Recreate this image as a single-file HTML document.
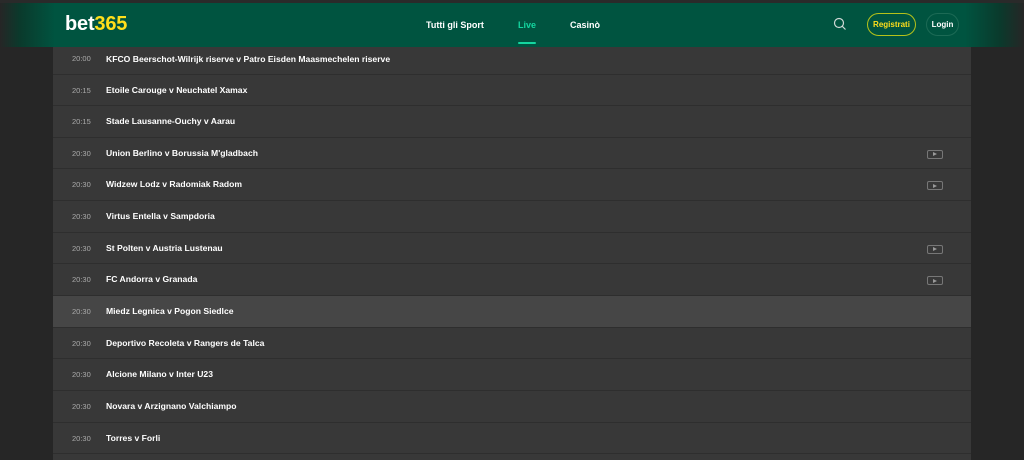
<!DOCTYPE html>
<html><head><meta charset="utf-8"><style>
*{margin:0;padding:0;box-sizing:border-box}
body{width:1024px;height:460px;overflow:hidden;background:#262626;font-family:"Liberation Sans",sans-serif;position:relative}
.hdr{position:absolute;left:0;right:0;top:3px;height:44px;background:linear-gradient(90deg,#262626 0,#0a3a2c 20px,#005440 55px,#005440 965px,#0a3a2c 1000px,#262626 1024px);z-index:2}
.top{position:absolute;left:0;right:0;top:0;height:3px;background:#2a2a2a}
.logo{position:absolute;left:65px;top:10px;font-weight:bold;font-size:20px;color:#fff;letter-spacing:-0.2px}
.logo span{color:#ffdf1b}
.nav{position:absolute;top:17px;font-size:9px;font-weight:bold;color:#fff}
.ul{position:absolute;left:518px;top:42px;width:18px;height:2px;background:#14d6a0;border-radius:1px}
.btn{position:absolute;top:13px;height:23px;border-radius:12px;font-size:8px;font-weight:bold;text-align:center;line-height:21px}
.content{position:absolute;left:53px;top:47px;width:918px;height:413px;background:#383838}
.row{position:absolute;left:53px;width:918px;height:31.67px;border-bottom:1px solid #2e2e2e;font-size:8.6px;color:#fff}
.row .t{position:absolute;left:19px;top:0;line-height:31px;color:#aaa;font-size:7.5px}
.row .n{position:absolute;left:53px;top:0;line-height:31px;font-weight:bold}
.hl{background:#464646}
.play{position:absolute;left:874px;top:12px;width:16px;height:9px;border:1px solid #777;border-radius:2px}
.play:after{content:"";position:absolute;left:5px;top:1.5px;border-left:4px solid #999;border-top:2.5px solid transparent;border-bottom:2.5px solid transparent}
</style></head><body>
<div class="top"></div>
<div class="hdr">
<div class="logo">bet<span>365</span></div>
<div class="nav" style="left:426px">Tutti gli Sport</div>
<div class="nav" style="left:518px;color:#14d6a0">Live</div>
<div class="nav" style="left:570px">Casinò</div>
<div class="ul" style="top:39px"></div>
<svg style="position:absolute;left:833px;top:14px" width="14" height="14" viewBox="0 0 14 14"><circle cx="6" cy="6" r="4.5" fill="none" stroke="#cfd8d5" stroke-width="1.2"/><line x1="9.3" y1="9.3" x2="12.5" y2="12.5" stroke="#cfd8d5" stroke-width="1.2"/></svg>
<div class="btn" style="left:867px;width:49px;border:1px solid #b5c21a;color:#ffdf1b;top:10px">Registrati</div>
<div class="btn" style="left:926px;width:33px;border:1px solid #1c6a55;color:#fff;top:10px">Login</div>
</div>
<div class="content"></div>
<div class="row" style="top:47px;height:27.5px"><span class="t" style="line-height:24px">20:00</span><span class="n" style="line-height:24px">KFCO Beerschot-Wilrijk riserve v Patro Eisden Maasmechelen riserve</span></div>
<div class="row" style="top:74.5px"><span class="t">20:15</span><span class="n">Etoile Carouge v Neuchatel Xamax</span></div>
<div class="row" style="top:106px"><span class="t">20:15</span><span class="n">Stade Lausanne-Ouchy v Aarau</span></div>
<div class="row" style="top:137.5px"><span class="t">20:30</span><span class="n">Union Berlino v Borussia M'gladbach</span><div class="play"></div></div>
<div class="row" style="top:169px"><span class="t">20:30</span><span class="n">Widzew Lodz v Radomiak Radom</span><div class="play"></div></div>
<div class="row" style="top:201px"><span class="t">20:30</span><span class="n">Virtus Entella v Sampdoria</span></div>
<div class="row" style="top:232.5px"><span class="t">20:30</span><span class="n">St Polten v Austria Lustenau</span><div class="play"></div></div>
<div class="row" style="top:264px"><span class="t">20:30</span><span class="n">FC Andorra v Granada</span><div class="play"></div></div>
<div class="row hl" style="top:296px"><span class="t">20:30</span><span class="n">Miedz Legnica v Pogon Siedlce</span></div>
<div class="row" style="top:327.5px"><span class="t">20:30</span><span class="n">Deportivo Recoleta v Rangers de Talca</span></div>
<div class="row" style="top:359px"><span class="t">20:30</span><span class="n">Alcione Milano v Inter U23</span></div>
<div class="row" style="top:391px"><span class="t">20:30</span><span class="n">Novara v Arzignano Valchiampo</span></div>
<div class="row" style="top:422.5px"><span class="t">20:30</span><span class="n">Torres v Forli</span></div>
</body></html>
